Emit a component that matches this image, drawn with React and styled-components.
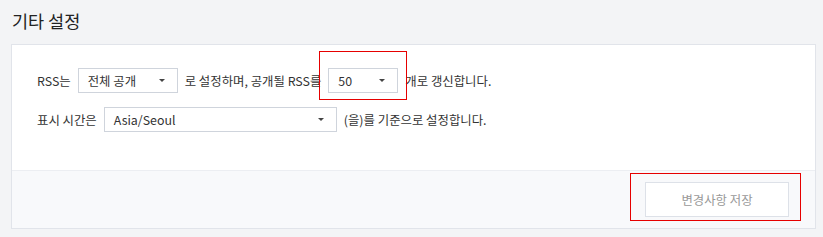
import React from "react";
import styled, { createGlobalStyle } from "styled-components";

const GlobalStyle = createGlobalStyle`
  body {
    margin: 0;
    background: #f3f4f6;
    font-family: "Noto Sans CJK KR", "Noto Sans", sans-serif;
    color: #333;
  }
`;

function Select({ value, width }) {
  return (
    <SelectBox $width={width}>
      <span>{value}</span>
      <Caret />
    </SelectBox>
  );
}

function App() {
  return (
    <>
      <GlobalStyle />
      <Page>
        <Title>기타 설정</Title>
        <Card>
          <CardBody>
            <Row>
              <span>RSS는</span>
              <Select value="전체 공개" width={100} />
              <span>로 설정하며, 공개될 RSS를</span>
              <Marked $left={-9} $top={-17} $w={88} $h={49}>
                <Select value="50" width={70} />
              </Marked>
              <span>개로 갱신합니다.</span>
            </Row>
            <Row>
              <span>표시 시간은</span>
              <Select value="Asia/Seoul" width={233} />
              <span>(을)를 기준으로 설정합니다.</span>
            </Row>
          </CardBody>
          <CardFooter>
            <Marked $left={-15} $top={-9} $w={171} $h={48}>
              <SaveButton>변경사항 저장</SaveButton>
            </Marked>
          </CardFooter>
        </Card>
      </Page>
    </>
  );
}

export default App;

const Page = styled.div`
  padding: 8px 7px 9px 11px;
`;

const Title = styled.h2`
  margin: 0 0 10px 1px;
  font-size: 17.5px;
  font-weight: 400;
  line-height: 26px;
  color: #222;
`;

const Card = styled.div`
  background: #fff;
  border: 1px solid #e1e4ea;
`;

const CardBody = styled.div`
  padding: 23px 25px 38px;
  display: flex;
  flex-direction: column;
  gap: 14px;
`;

const Row = styled.div`
  display: flex;
  align-items: center;
  gap: 7px;
  font-size: 12.4px;
  white-space: nowrap;
`;

const SelectBox = styled.div`
  box-sizing: border-box;
  width: ${(p) => p.$width}px;
  height: 25px;
  padding: 0 12px 0 9px;
  border: 1px solid #cfd4dc;
  background: #fff;
  display: flex;
  align-items: center;
  justify-content: space-between;
  font-size: 12.4px;
  color: #333;
`;

const Caret = styled.span`
  width: 0;
  height: 0;
  border-left: 3px solid transparent;
  border-right: 3px solid transparent;
  border-top: 3px solid #444;
`;

const Marked = styled.div`
  position: relative;
  display: inline-flex;

  &::after {
    content: "";
    position: absolute;
    left: ${(p) => p.$left}px;
    top: ${(p) => p.$top}px;
    width: ${(p) => p.$w}px;
    height: ${(p) => p.$h}px;
    box-sizing: border-box;
    border: 1px solid #e60000;
    pointer-events: none;
  }
`;

const CardFooter = styled.div`
  border-top: 1px solid #eceef2;
  background: #f8f9fb;
  padding: 11px 26px 11px;
  display: flex;
  justify-content: flex-end;
`;

const SaveButton = styled.button`
  width: 144px;
  height: 35px;
  background: #fff;
  border: 1px solid #dde1e8;
  color: #999;
  font-family: inherit;
  font-size: 12.4px;
  cursor: default;
`;
